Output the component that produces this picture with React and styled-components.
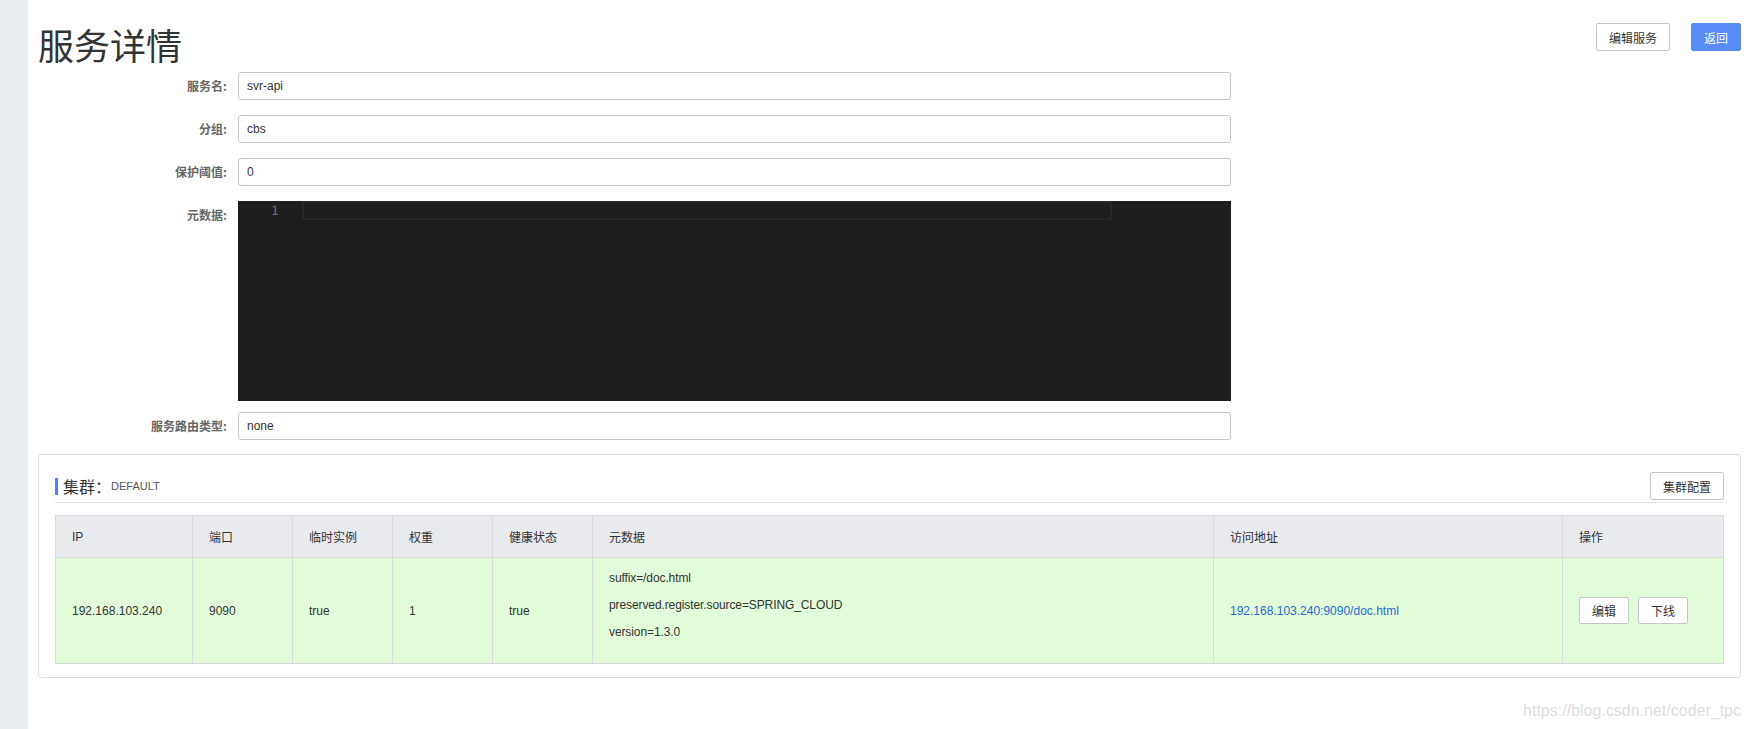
import React from "react";
import styled, { createGlobalStyle } from "styled-components";

const GlobalStyle = createGlobalStyle`
  html, body {
    margin: 0;
    padding: 0;
    background: #fff;
  }
  body {
    font-family: "Liberation Sans", "Noto Sans CJK SC", sans-serif;
    color: #333;
  }
  * {
    box-sizing: border-box;
  }
`;

const columns = [
  { title: "IP", width: 137 },
  { title: "端口", width: 100 },
  { title: "临时实例", width: 100 },
  { title: "权重", width: 100 },
  { title: "健康状态", width: 100 },
  { title: "元数据", width: 621 },
  { title: "访问地址", width: 349 },
  { title: "操作", width: 161 },
];

const instance = {
  ip: "192.168.103.240",
  port: "9090",
  ephemeral: "true",
  weight: "1",
  healthy: "true",
  metadata: ["suffix=/doc.html", "preserved.register.source=SPRING_CLOUD", "version=1.3.0"],
  url: "192.168.103.240:9090/doc.html",
};

export default function App() {
  return (
    <Page>
      <GlobalStyle />
      <Sidebar />
      <Main>
        <TitleRow>
          <Title>服务详情</Title>
          <ButtonGroup>
            <Button>编辑服务</Button>
            <Button $primary>返回</Button>
          </ButtonGroup>
        </TitleRow>

        <Form>
          <FormRow>
            <Label>服务名:</Label>
            <Input readOnly value="svr-api" />
          </FormRow>
          <FormRow>
            <Label>分组:</Label>
            <Input readOnly value="cbs" />
          </FormRow>
          <FormRow>
            <Label>保护阈值:</Label>
            <Input readOnly value="0" />
          </FormRow>
          <FormRow $gap={11}>
            <Label>元数据:</Label>
            <Editor>
              <Gutter>1</Gutter>
              <CodeArea>
                <CurrentLine />
              </CodeArea>
            </Editor>
          </FormRow>
          <FormRow $gap={0}>
            <Label>服务路由类型:</Label>
            <Input readOnly value="none" />
          </FormRow>
        </Form>

        <Card>
          <CardHeader>
            <ClusterTitle>
              集群：<ClusterName>DEFAULT</ClusterName>
            </ClusterTitle>
            <Button>集群配置</Button>
          </CardHeader>

          <Table>
            <colgroup>
              {columns.map((c) => (
                <col key={c.title} style={{ width: c.width }} />
              ))}
            </colgroup>
            <thead>
              <tr>
                {columns.map((c) => (
                  <Th key={c.title}>{c.title}</Th>
                ))}
              </tr>
            </thead>
            <tbody>
              <tr>
                <Td>{instance.ip}</Td>
                <Td>{instance.port}</Td>
                <Td>{instance.ephemeral}</Td>
                <Td>{instance.weight}</Td>
                <Td>{instance.healthy}</Td>
                <Td>
                  <MetaList>
                    {instance.metadata.map((m) => (
                      <MetaLine key={m}>{m}</MetaLine>
                    ))}
                  </MetaList>
                </Td>
                <Td>
                  <Link href="#">{instance.url}</Link>
                </Td>
                <Td>
                  <Actions>
                    <SmallButton>编辑</SmallButton>
                    <SmallButton>下线</SmallButton>
                  </Actions>
                </Td>
              </tr>
            </tbody>
          </Table>
        </Card>

        <Watermark>https://blog.csdn.net/coder_tpc</Watermark>
      </Main>
    </Page>
  );
}

const Page = styled.div`
  display: flex;
  min-height: 100vh;
`;

const Sidebar = styled.aside`
  width: 28px;
  flex-shrink: 0;
  background: #e9ecf1;
`;

const Main = styled.main`
  flex: 1;
  padding: 0 10px 0 10px;
`;

const TitleRow = styled.div`
  display: flex;
  justify-content: space-between;
  align-items: flex-start;
  padding-top: 23px;
`;

const Title = styled.h1`
  margin: 1px 0 0 0;
  font-family: "Noto Sans CJK SC", sans-serif;
  font-size: 36px;
  line-height: 40px;
  font-weight: normal;
  color: #333;
`;

const ButtonGroup = styled.div`
  display: flex;
  gap: 21px;
`;

const Button = styled.button`
  height: 28px;
  padding: 0 12px;
  font-family: "Noto Sans CJK SC", sans-serif;
  font-size: 12px;
  color: ${(p) => (p.$primary ? "#fff" : "#333")};
  background: ${(p) => (p.$primary ? "#5a8cf9" : "#fff")};
  border: 1px solid ${(p) => (p.$primary ? "#5a8cf9" : "#c5c5cd")};
  border-radius: 2px;
  cursor: pointer;
`;

const Form = styled.div`
  margin-top: 8px;
`;

const FormRow = styled.div`
  display: grid;
  grid-template-columns: 189px 993px;
  column-gap: 11px;
  align-items: start;
  margin-bottom: ${(p) => (p.$gap ?? 15)}px;
`;

const Label = styled.label`
  font-family: "Noto Sans CJK SC", sans-serif;
  font-size: 12px;
  font-weight: 700;
  line-height: 28px;
  color: #666;
  text-align: right;
`;

const Input = styled.input`
  height: 28px;
  width: 100%;
  padding: 0 8px;
  font-family: "Liberation Sans", "Noto Sans CJK SC", sans-serif;
  font-size: 12px;
  color: #333;
  border: 1px solid #c6c6cf;
  border-radius: 3px;
  outline: none;
`;

const Editor = styled.div`
  display: flex;
  height: 200px;
  background: #1e1e1e;
`;

const Gutter = styled.div`
  width: 64px;
  padding-left: 33px;
  font-family: "DejaVu Sans Mono", monospace;
  font-size: 13px;
  line-height: 19px;
  color: #6e6e6e;
`;

const CodeArea = styled.div`
  flex: 1;
`;

const CurrentLine = styled.div`
  width: 810px;
  height: 19px;
  border: 2px solid #282828;
`;

const Card = styled.section`
  margin-top: 14px;
  border: 1px solid #dddde1;
  border-radius: 3px;
  padding: 17px 16px 13px 16px;
`;

const CardHeader = styled.div`
  display: flex;
  justify-content: space-between;
  align-items: center;
  padding-bottom: 2px;
  border-bottom: 1px solid #e4e4e8;
  margin-bottom: 12px;
`;

const ClusterTitle = styled.div`
  display: flex;
  align-items: center;
  height: 17px;
  border-left: 3px solid #4f7ef7;
  padding-left: 5px;
  font-family: "Noto Sans CJK SC", sans-serif;
  font-size: 16px;
  line-height: 17px;
  color: #333;
`;

const ClusterName = styled.span`
  font-family: "Liberation Sans", sans-serif;
  font-size: 11px;
  color: #555;
`;

const Table = styled.table`
  width: 100%;
  table-layout: fixed;
  border-collapse: collapse;
  border: 1px solid #dadade;
`;

const Th = styled.th`
  height: 42px;
  padding: 0 16px;
  background: #e9eaee;
  border: 1px solid #dadade;
  font-family: "Liberation Sans", "Noto Sans CJK SC", sans-serif;
  font-size: 12px;
  font-weight: normal;
  text-align: left;
  color: #333;
`;

const Td = styled.td`
  height: 106px;
  padding: 0 16px;
  background: #e2fcd9;
  border: 1px solid #dadade;
  font-size: 12px;
  color: #333;
  vertical-align: middle;
`;

const MetaList = styled.div`
  padding-bottom: 10px;
`;

const MetaLine = styled.div`
  line-height: 27px;
  letter-spacing: -0.1px;
`;

const Link = styled.a`
  color: #1e6bd6;
  text-decoration: none;
`;

const Actions = styled.div`
  display: flex;
  gap: 9px;
`;

const SmallButton = styled.button`
  height: 27px;
  width: 50px;
  padding: 0;
  font-family: "Noto Sans CJK SC", sans-serif;
  font-size: 12px;
  color: #333;
  background: #fff;
  border: 1px solid #c5c5cd;
  border-radius: 2px;
`;

const Watermark = styled.div`
  margin-top: 24px;
  font-family: "Liberation Sans", sans-serif;
  font-size: 16px;
  line-height: 18px;
  color: #dcdcdc;
  text-align: right;
`;
